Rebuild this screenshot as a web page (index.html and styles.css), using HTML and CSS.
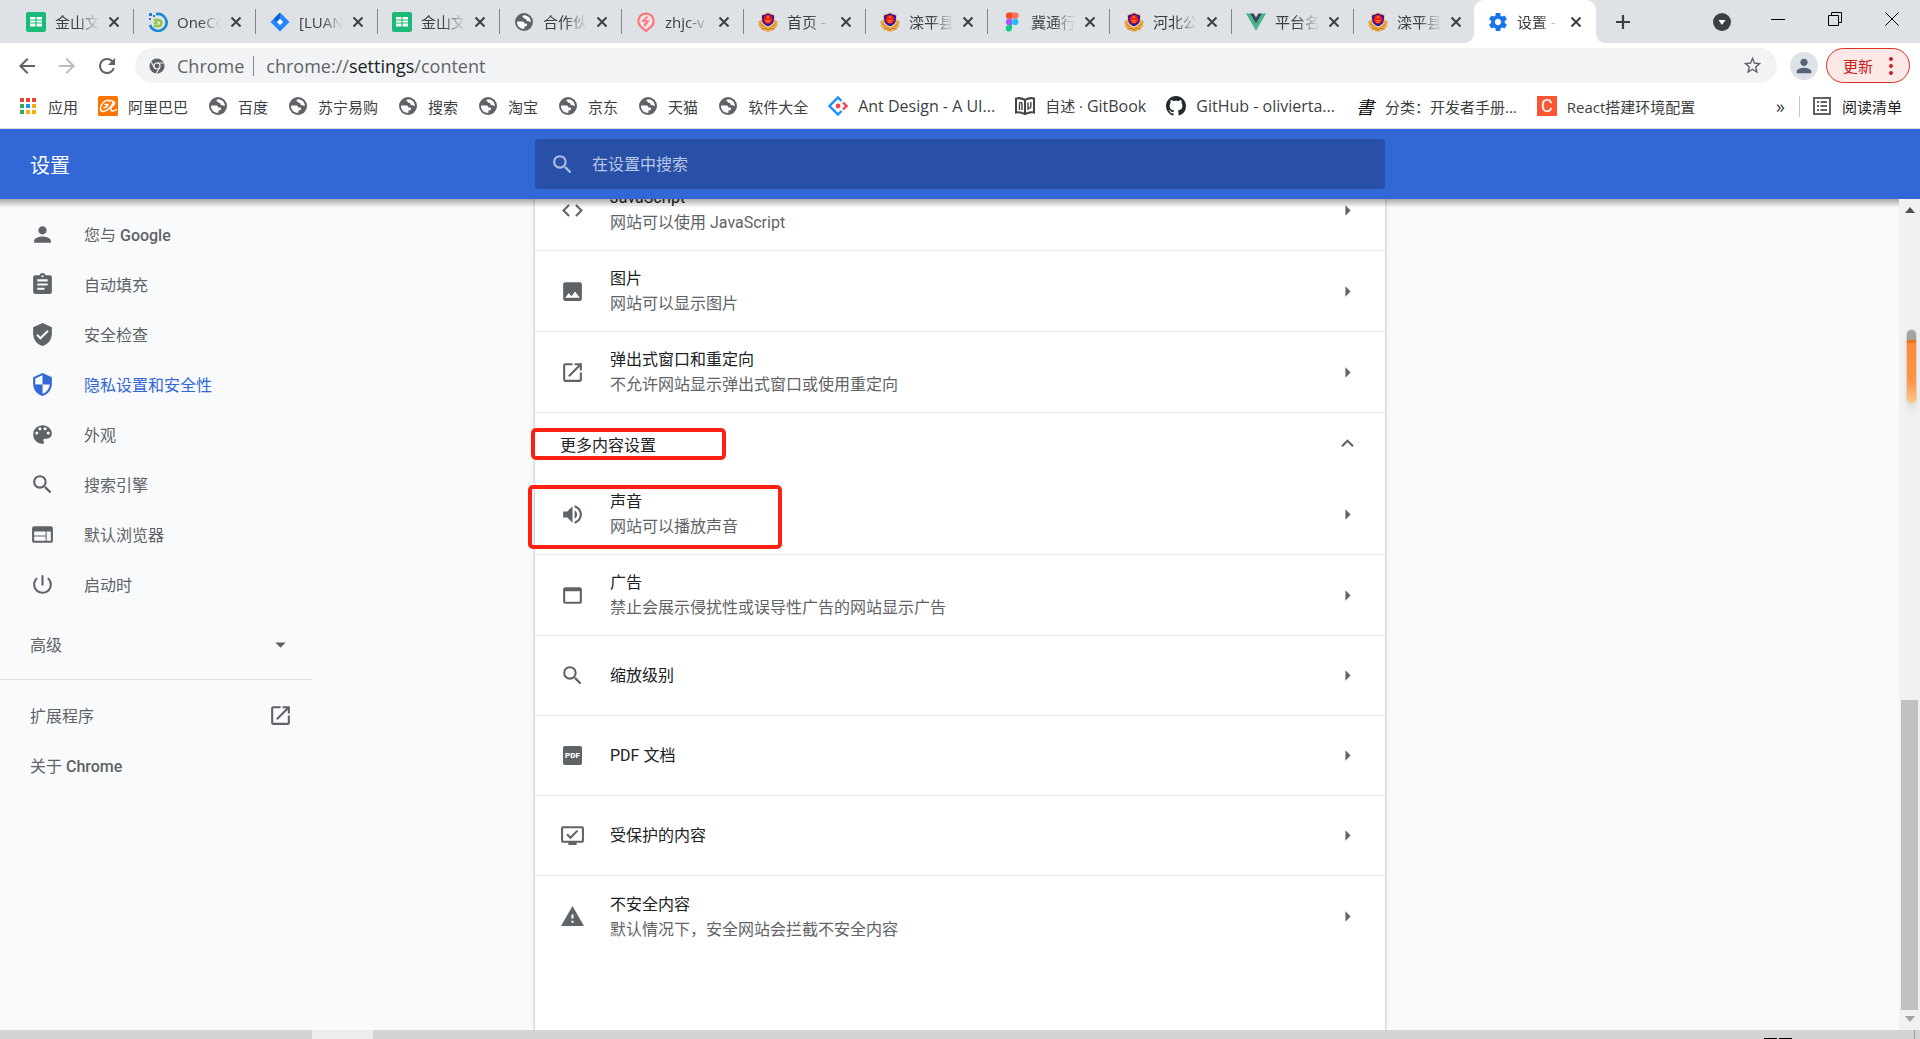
FILE: index.html
```html
<!DOCTYPE html>
<html lang="zh-CN">
<head>
<meta charset="utf-8">
<title>设置 - 网站设置</title>
<link rel="stylesheet" href="styles.css">
</head>
<body>
<svg class="sprite" aria-hidden="true">
  <symbol id="i-close" viewBox="0 0 12 12"><path d="M1.5 1.5l9 9M10.5 1.5l-9 9" fill="none" stroke="currentColor" stroke-width="2"/></symbol>
  <symbol id="i-sheet" viewBox="0 0 20 20"><rect width="20" height="20" rx="2" fill="#1bbb77"/><path d="M4 5h12v9.500H4z" fill="#fff"/><path d="M4 8h12M4 11h12M10 5v10" stroke="#1bbb77" stroke-width="1.200"/></symbol>
  <symbol id="i-onecloud" viewBox="0 0 20 20"><path d="M8 2.200A8.500 8.500 0 1 1 2 13" fill="none" stroke="#1489cf" stroke-width="2.600"/><path d="M6 8h4.500a3 3 0 0 1 0 6H6M6 11h3.500" fill="none" stroke="#8dc63f" stroke-width="2.400"/><path d="M1 1h3v3H1zM5 3h2v2H5zM1 6h2v2H1z" fill="#1489cf"/></symbol>
  <symbol id="i-jira" viewBox="0 0 20 20"><path d="M10 .5l9.500 9.500-9.500 9.500L.5 10z" fill="#2684ff"/><path d="M10 .5v6.500L6.500 10 3.800 6.700z" fill="#0f5fd6"/><path d="M10 6.800l3.200 3.200-3.200 3.200L6.800 10z" fill="#fff"/></symbol>
  <symbol id="i-globe" viewBox="0 0 20 20"><circle cx="10" cy="10" r="9" fill="#5f6368"/><path d="M3 9.500h5c1.600 0 2.300.9 2.300 2h1.500c.9 0 1.300.7 1.300 1.500 0 .9-.8 1.300-1.800 1.300h-.8v2.500C6.400 17.300 2.800 14 3 9.500zM9.500 3.200c-.8.500-1 1.300-1 2.300 1.700 0 2 .6 2.200 1.500h1.500c.2 1.300.6 2.300 2 2.300.8 0 1.300.6 2.700.7C17 6.200 13.800 3 9.500 3.200z" fill="#fff"/></symbol>
  <symbol id="i-pin" viewBox="0 0 20 20"><path d="M10 1.500a7.600 7.600 0 0 1 4.500 13.700L10 19l-4.500-3.800A7.600 7.600 0 0 1 10 1.500z" fill="#f6dfe3" stroke="#ff6f74" stroke-width="2"/><path d="M11.500 4.500L7 9h5l-3.500 5 1-3.500" fill="none" stroke="#ff6f74" stroke-width="1.600"/></symbol>
  <symbol id="i-police" viewBox="0 0 20 20"><path d="M2.500 8L0 10l1 2-.5 2 2 1.500 1 2.500 3 .5L10 20l3.500-1.500 3-.5 1-2.500 2-1.500-.5-2 1-2-2.500-2z" fill="#e8a74a"/><path d="M2.500 11.500l3 3M17.500 11.500l-3 3M4.500 16.500h3.500l2 1.500 2-1.500h3.500" stroke="#b87423" stroke-width=".8" fill="none"/><path d="M10 .2l3.500 1.500 3.500 1-.2 6c-.3 3.600-3.300 5.300-6.800 6.800-3.500-1.500-6.500-3.200-6.800-6.800L3 2.700l3.500-1z" fill="#f2c667"/><path d="M10 1.200l3 1.400 3 .8-.2 5c-.3 3-2.800 4.600-5.800 5.900-3-1.300-5.500-2.900-5.800-5.900l-.2-5 3-.8z" fill="#1a10c4"/><circle cx="10" cy="7.300" r="4.500" fill="#f5190d"/><circle cx="10" cy="5.300" r="1" fill="#ffb03b"/><path d="M7.500 8.500h5M8 10.200h4" stroke="#ff9a2e" stroke-width=".9"/></symbol>
  <symbol id="i-figma" viewBox="0 0 20 20"><path d="M7 .5h3v6.300H7a3.150 3.150 0 0 1 0-6.300z" fill="#f24e1e"/><path d="M10 .5h3.500a3.150 3.150 0 0 1 0 6.300H10z" fill="#ff7262"/><path d="M7 6.800h3v6.300H7a3.150 3.150 0 0 1 0-6.300z" fill="#a259ff"/><circle cx="13.300" cy="9.950" r="3.150" fill="#1abcfe"/><path d="M7 13.100h3v3.200a3.150 3.150 0 1 1-3-3.200z" fill="#0acf83"/></symbol>
  <symbol id="i-vue" viewBox="0 0 20 20"><path d="M0 1.500h4l6 10.300 6-10.300h4L10 18.800z" fill="#41b883"/><path d="M4 1.500h3.700L10 5.500l2.300-4H16L10 11.800z" fill="#34495e"/></symbol>
  <symbol id="i-gear" viewBox="1 1 22 22"><path fill="#1a73e8" d="M19.430 12.980c.04-.32.070-.64.070-.98s-.03-.66-.07-.98l2.110-1.650c.19-.15.240-.42.120-.64l-2-3.460c-.12-.22-.39-.3-.61-.22l-2.490 1c-.52-.4-1.080-.73-1.690-.98l-.38-2.650C14.460 2.180 14.250 2 14 2h-4c-.25 0-.46.180-.49.420l-.38 2.650c-.61.250-1.170.59-1.690.98l-2.490-1c-.23-.09-.49 0-.61.220l-2 3.460c-.13.220-.07.490.120.640l2.110 1.650c-.04.320-.07.650-.07.980s.03.660.070.980l-2.110 1.650c-.19.150-.24.420-.12.640l2 3.460c.12.220.39.300.61.220l2.490-1c.52.400 1.080.730 1.690.980l.38 2.650c.03.240.24.420.49.420h4c.25 0 .46-.18.490-.42l.38-2.650c.61-.25 1.170-.59 1.690-.98l2.490 1c.23.090.49 0 .61-.22l2-3.460c.12-.22.070-.49-.12-.64l-2.110-1.650zM12 15.500c-1.930 0-3.500-1.570-3.500-3.500s1.570-3.500 3.500-3.500 3.500 1.570 3.500 3.500-1.570 3.500-3.500 3.500z"/></symbol>
  <symbol id="i-apps" viewBox="0 0 20 20"><path d="M2 2h4v4H2zM8 2h4v4H8zM14 2h4v4h-4z" fill="#ea4335"/><path d="M2 8h4v4H2z" fill="#34a853"/><path d="M8 8h4v4H8z" fill="#1a90f0"/><path d="M14 8h4v4h-4zM8 14h4v4H8zM14 14h4v4h-4z" fill="#fbab05"/><path d="M2 14h4v4H2z" fill="#34a853"/></symbol>
  <symbol id="i-ali" viewBox="0 0 20 20"><rect width="20" height="20" rx="1.500" fill="#ff7300"/><path d="M11.500 4.500C7 3.500 2.500 8 2.500 12.500c0 4.500 5 3.500 8.500 0 2.500-2.500 4.500-6 3.500-7.500-.8-1-2.500-.5-3.500.5M6 11.500c2.500.3 3.500-1.500 4-3H7M15 5.500c3 .3 1.500 3.500-1.500 5.500-2.500 3 .5 5.500 5 2.500" fill="none" stroke="#fff" stroke-width="1.500" stroke-linecap="round"/></symbol>
  <symbol id="i-ant" viewBox="0 0 20 20"><path d="M13.500 5L10 1.500 1.500 10l8.500 8.500 3.500-3.500" fill="none" stroke="#1c8cff" stroke-width="2.400"/><path d="M15 6.500l3.500 3.500L15 13.500" fill="none" stroke="#f5434f" stroke-width="2.400"/><circle cx="10" cy="10" r="2.400" fill="#f5434f"/></symbol>
  <symbol id="i-book" viewBox="0 0 20 20"><path d="M1 2.500c3-.8 6-.3 9 1.300 3-1.600 6-2.100 9-1.300v14c-3-.5-6 0-9 1.700-3-1.700-6-2.200-9-1.700zM10 4v14" fill="#fff" stroke="#444" stroke-width="2"/><path d="M4.500 14V7.500c0-1.500 2.500-1.500 2.500 0V14M13 14V6.500M15.800 6v5c0 1.500-2.800 1.500-2.800 0" fill="none" stroke="#444" stroke-width="1.400"/></symbol>
  <symbol id="i-github" viewBox="0 0 16 16"><path fill="#24292e" d="M8 0C3.580 0 0 3.580 0 8c0 3.540 2.290 6.530 5.470 7.590.4.070.55-.17.55-.38 0-.19-.01-.82-.01-1.490-2.010.37-2.530-.49-2.690-.94-.09-.23-.48-.94-.82-1.130-.28-.15-.68-.52-.01-.53.630-.01 1.080.580 1.230.820.720 1.210 1.870.870 2.330.660.070-.52.280-.87.510-1.070-1.780-.2-3.640-.89-3.640-3.950 0-.87.310-1.590.820-2.150-.08-.2-.36-1.020.080-2.120 0 0 .67-.21 2.200.820.640-.18 1.320-.27 2-.27s1.360.09 2 .270c1.530-1.040 2.200-.82 2.200-.82.440 1.100.160 1.920.080 2.120.510.560.820 1.270.820 2.150 0 3.070-1.870 3.750-3.650 3.950.290.250.540.730.540 1.480 0 1.070-.01 1.930-.01 2.200 0 .21.150.460.550.380A8.010 8.010 0 0 0 16 8c0-4.420-3.580-8-8-8z"/></symbol>
  <symbol id="i-list" viewBox="0 0 20 20"><path d="M2 2h16v16H2z" fill="none" stroke="#5f6368" stroke-width="2"/><path d="M5 6h2M5 10h2M5 14h2M8.500 6H15M8.500 10H15M8.500 14H15" stroke="#5f6368" stroke-width="2"/></symbol>
  <symbol id="i-back" viewBox="0 0 24 24"><path d="M20 11H7.830l5.590-5.590L12 4l-8 8 8 8 1.410-1.410L7.830 13H20z"/></symbol>
  <symbol id="i-forward" viewBox="0 0 24 24"><path d="M12 4l-1.410 1.410L16.170 11H4v2h12.170l-5.580 5.590L12 20l8-8z"/></symbol>
  <symbol id="i-reload" viewBox="0 0 24 24"><path d="M17.650 6.350A7.960 7.960 0 0 0 12 4a8 8 0 1 0 7.730 10h-2.080A6 6 0 1 1 12 6c1.660 0 3.140.69 4.220 1.780L13 11h7V4z"/></symbol>
  <symbol id="i-chrome" viewBox="0 0 18 18"><circle cx="9" cy="9" r="8.500" fill="#5f6368"/><circle cx="9" cy="9" r="3.400" fill="none" stroke="#f1f3f4" stroke-width="1.300"/><path d="M9 5.600h7.500M6 10.700L2.300 4.300M12 10.700L8.300 17" stroke="#f1f3f4" stroke-width="1.200"/></symbol>
  <symbol id="i-star" viewBox="0 0 24 24"><path d="M22 9.240l-7.190-.62L12 2 9.190 8.630 2 9.240l5.460 4.730L5.820 21 12 17.270 18.180 21l-1.630-7.030zM12 15.400l-3.760 2.270 1-4.280-3.320-2.880 4.380-.38L12 6.100l1.710 4.040 4.380.38-3.320 2.880 1 4.280z"/></symbol>
  <symbol id="i-person" viewBox="0 0 24 24"><path d="M12 12c2.210 0 4-1.790 4-4s-1.790-4-4-4-4 1.790-4 4 1.790 4 4 4zm0 2c-2.670 0-8 1.340-8 4v2h16v-2c0-2.660-5.330-4-8-4z"/></symbol>
  <symbol id="i-clipboard" viewBox="0 0 24 24"><path d="M19 3h-4.180C14.400 1.840 13.300 1 12 1s-2.400.84-2.820 2H5c-1.100 0-2 .9-2 2v14c0 1.100.9 2 2 2h14c1.100 0 2-.9 2-2V5c0-1.100-.9-2-2-2zm-7 0c.55 0 1 .45 1 1s-.45 1-1 1-1-.45-1-1 .45-1 1-1zm2 14H7v-2h7v2zm3-4H7v-2h10v2zm0-4H7V7h10v2z"/></symbol>
  <symbol id="i-check" viewBox="0 0 24 24"><path d="M12 1L3 5v6c0 5.550 3.840 10.740 9 12 5.160-1.260 9-6.450 9-12V5l-9-4zm-2 16l-4-4 1.410-1.410L10 14.170l6.590-6.590L18 9l-8 8z"/></symbol>
  <symbol id="i-shield" viewBox="0 0 24 24"><path d="M12 1L3 5v6c0 5.550 3.840 10.740 9 12 5.160-1.260 9-6.450 9-12V5l-9-4zm0 10.990h7c-.53 4.120-3.280 7.790-7 8.940V12H5V6.300l7-3.110v8.800z"/></symbol>
  <symbol id="i-palette" viewBox="0 0 24 24"><path d="M12 3a9 9 0 0 0 0 18c.83 0 1.500-.67 1.500-1.500 0-.39-.15-.74-.39-1.010-.23-.26-.38-.61-.38-.99 0-.83.670-1.500 1.500-1.500H16c2.760 0 5-2.240 5-5 0-4.420-4.030-8-9-8zm-5.500 9a1.500 1.500 0 1 1 0-3 1.500 1.500 0 0 1 0 3zm3-4a1.500 1.500 0 1 1 0-3 1.500 1.500 0 0 1 0 3zm5 0a1.500 1.500 0 1 1 0-3 1.500 1.500 0 0 1 0 3zm3 4a1.500 1.500 0 1 1 0-3 1.500 1.500 0 0 1 0 3z"/></symbol>
  <symbol id="i-search" viewBox="0 0 24 24"><path d="M15.500 14h-.79l-.28-.27A6.470 6.470 0 0 0 16 9.500 6.500 6.500 0 1 0 9.500 16c1.610 0 3.090-.59 4.230-1.570l.27.280v.79l5 4.990L20.490 19l-4.990-5zm-6 0a4.500 4.500 0 1 1 0-9 4.500 4.500 0 0 1 0 9z"/></symbol>
  <symbol id="i-web" viewBox="0 0 24 24"><path d="M20 4H4c-1.100 0-1.990.9-1.990 2L2 18c0 1.100.9 2 2 2h16c1.100 0 2-.9 2-2V6c0-1.100-.9-2-2-2zm-5 14H4v-4h11v4zm0-5H4V9h11v4zm5 5h-4V9h4v9z"/></symbol>
  <symbol id="i-power" viewBox="0 0 24 24"><path d="M13 3h-2v10h2V3zm4.830 2.170l-1.420 1.420A6.920 6.920 0 0 1 19 12a7 7 0 1 1-11.420-5.420L6.170 5.170A8.930 8.930 0 0 0 3 12a9 9 0 0 0 18 0c0-2.740-1.230-5.180-3.170-6.830z"/></symbol>
  <symbol id="i-down" viewBox="0 0 24 24"><path d="M7 10l5 5 5-5z"/></symbol>
  <symbol id="i-right" viewBox="0 0 24 24"><path d="M10 7v10l5-5z"/></symbol>
  <symbol id="i-up" viewBox="0 0 24 24"><path d="M12 8l-6 6 1.410 1.410L12 10.830l4.590 4.580L18 14z"/></symbol>
  <symbol id="i-open" viewBox="0 0 24 24"><path d="M19 19H5V5h7V3H5a2 2 0 0 0-2 2v14a2 2 0 0 0 2 2h14c1.100 0 2-.9 2-2v-7h-2v7zM14 3v2h3.590l-9.830 9.830 1.410 1.410L19 6.410V10h2V3h-7z"/></symbol>
  <symbol id="i-code" viewBox="0 0 24 24"><path d="M9.400 16.600L4.800 12l4.600-4.600L8 6l-6 6 6 6 1.400-1.400zm5.200 0l4.600-4.600-4.600-4.600L16 6l6 6-6 6-1.400-1.400z"/></symbol>
  <symbol id="i-image" viewBox="0 0 24 24"><path d="M21 19V5c0-1.100-.9-2-2-2H5c-1.100 0-2 .9-2 2v14c0 1.100.9 2 2 2h14c1.100 0 2-.9 2-2zM8.500 13.500l2.500 3.010L14.500 12l4.500 6H5l3.500-4.500z"/></symbol>
  <symbol id="i-sound" viewBox="0 0 24 24"><path d="M3 9v6h4l5 5V4L7 9H3zm13.500 3A4.500 4.500 0 0 0 14 7.970v8.050c1.480-.73 2.500-2.250 2.500-4.020zM14 3.230v2.060c2.890.86 5 3.540 5 6.710s-2.110 5.850-5 6.710v2.060c4.010-.91 7-4.490 7-8.770s-2.990-7.860-7-8.770z"/></symbol>
  <symbol id="i-window" viewBox="0 0 24 24"><path d="M19 4H5a2 2 0 0 0-2 2v12a2 2 0 0 0 2 2h14c1.100 0 2-.9 2-2V6c0-1.100-.89-2-2-2zm0 14H5V8h14v10z"/></symbol>
  <symbol id="i-monitor" viewBox="0 0 24 24"><path d="M21 3H3c-1.100 0-2 .9-2 2v12c0 1.100.9 2 2 2h5v2h8v-2h5c1.100 0 2-.9 2-2V5c0-1.100-.9-2-2-2zm0 14H3V5h18v12zM10 15.500l-4-4 1.400-1.400 2.600 2.600 6.100-6.100L17.500 8z"/></symbol>
  <symbol id="i-warn" viewBox="0 0 24 24"><path d="M1 21h22L12 2 1 21zm12-3h-2v-2h2v2zm0-4h-2v-4h2v4z"/></symbol>
</svg>

<div class="browser">
  <header class="tabstrip">
    <nav class="tabs" aria-label="标签页">
      <div class="tab"><svg class="fav"><use href="#i-sheet"/></svg><a href="#">金山文</a><button aria-label="关闭"><svg><use href="#i-close"/></svg></button></div>
      <div class="tab"><svg class="fav"><use href="#i-onecloud"/></svg><a href="#">OneCo</a><button aria-label="关闭"><svg><use href="#i-close"/></svg></button></div>
      <div class="tab"><svg class="fav"><use href="#i-jira"/></svg><a href="#">[LUAN</a><button aria-label="关闭"><svg><use href="#i-close"/></svg></button></div>
      <div class="tab"><svg class="fav"><use href="#i-sheet"/></svg><a href="#">金山文</a><button aria-label="关闭"><svg><use href="#i-close"/></svg></button></div>
      <div class="tab"><svg class="fav"><use href="#i-globe"/></svg><a href="#">合作伙</a><button aria-label="关闭"><svg><use href="#i-close"/></svg></button></div>
      <div class="tab"><svg class="fav"><use href="#i-pin"/></svg><a href="#">zhjc-v</a><button aria-label="关闭"><svg><use href="#i-close"/></svg></button></div>
      <div class="tab"><svg class="fav"><use href="#i-police"/></svg><a href="#">首页 -</a><button aria-label="关闭"><svg><use href="#i-close"/></svg></button></div>
      <div class="tab"><svg class="fav"><use href="#i-police"/></svg><a href="#">滦平县</a><button aria-label="关闭"><svg><use href="#i-close"/></svg></button></div>
      <div class="tab"><svg class="fav"><use href="#i-figma"/></svg><a href="#">冀通行</a><button aria-label="关闭"><svg><use href="#i-close"/></svg></button></div>
      <div class="tab"><svg class="fav"><use href="#i-police"/></svg><a href="#">河北公</a><button aria-label="关闭"><svg><use href="#i-close"/></svg></button></div>
      <div class="tab"><svg class="fav"><use href="#i-vue"/></svg><a href="#">平台名</a><button aria-label="关闭"><svg><use href="#i-close"/></svg></button></div>
      <div class="tab before-active"><svg class="fav"><use href="#i-police"/></svg><a href="#">滦平县</a><button aria-label="关闭"><svg><use href="#i-close"/></svg></button></div>
      <div class="tab active"><svg class="fav"><use href="#i-gear"/></svg><a href="#">设置 -</a><button aria-label="关闭"><svg><use href="#i-close"/></svg></button></div>
    </nav>
    <button class="newtab" aria-label="新标签页"><svg viewBox="0 0 16 16"><path d="M8 1v14M1 8h14" stroke="#3c4043" stroke-width="2.200"/></svg></button>
    <button class="tabsearch" aria-label="搜索标签页"><svg viewBox="0 0 18 18"><circle cx="9" cy="9" r="9" fill="#3c4043"/><path d="M5.500 7h7L9 12z" fill="#fff"/></svg></button>
    <div class="winctl">
      <button aria-label="最小化"><svg viewBox="0 0 14 14"><path d="M0 7.500h14" stroke="#000"/></svg></button>
      <button aria-label="还原"><svg viewBox="0 0 14 14"><path d="M.5 3.500h10v10H.500zM3.500 3V.500h10v10H11" fill="none" stroke="#000"/></svg></button>
      <button aria-label="关闭窗口"><svg viewBox="0 0 14 14"><path d="M.5.500l13 13M13.500.500l-13 13" stroke="#000" stroke-width="1"/></svg></button>
    </div>
  </header>

  <div class="toolbar">
    <button class="nav" aria-label="后退"><svg><use href="#i-back"/></svg></button>
    <button class="nav off" aria-label="前进"><svg><use href="#i-forward"/></svg></button>
    <button class="nav" aria-label="重新加载"><svg><use href="#i-reload"/></svg></button>
    <div class="omnibox">
      <svg class="site"><use href="#i-chrome"/></svg>
      <span class="chip">Chrome</span>
      <div class="url" role="textbox" contenteditable="true" spellcheck="false" aria-label="地址栏">chrome://<b>settings</b>/content</div>
      <button class="star" aria-label="加入书签"><svg><use href="#i-star"/></svg></button>
    </div>
    <button class="avatar" aria-label="用户"><svg><use href="#i-person"/></svg></button>
    <button class="update">更新<svg viewBox="0 0 4 20"><circle cx="2" cy="3" r="2"/><circle cx="2" cy="10" r="2"/><circle cx="2" cy="17" r="2"/></svg></button>
  </div>

  <nav class="bookmarks" aria-label="书签栏">
    <a href="#"><svg><use href="#i-apps"/></svg>应用</a>
    <a href="#"><svg><use href="#i-ali"/></svg>阿里巴巴</a>
    <a href="#"><svg><use href="#i-globe"/></svg>百度</a>
    <a href="#"><svg><use href="#i-globe"/></svg>苏宁易购</a>
    <a href="#"><svg><use href="#i-globe"/></svg>搜索</a>
    <a href="#"><svg><use href="#i-globe"/></svg>淘宝</a>
    <a href="#"><svg><use href="#i-globe"/></svg>京东</a>
    <a href="#"><svg><use href="#i-globe"/></svg>天猫</a>
    <a href="#"><svg><use href="#i-globe"/></svg>软件大全</a>
    <a href="#" class="latin"><svg><use href="#i-ant"/></svg>Ant Design - A UI...</a>
    <a href="#"><svg><use href="#i-book"/></svg><span>自述 · <span class="latin">GitBook</span></span></a>
    <a href="#" class="latin"><svg><use href="#i-github"/></svg>GitHub - olivierta...</a>
    <a href="#"><span class="glyph brush">書</span>分类：开发者手册...</a>
    <a href="#"><span class="glyph csdn">C</span>React搭建环境配置</a>
    <button class="more" aria-label="更多书签">»</button>
    <a href="#" class="reading"><svg><use href="#i-list"/></svg>阅读清单</a>
  </nav>

  <div class="titlebar">
    <h1>设置</h1>
    <label class="search"><svg><use href="#i-search"/></svg><input type="search" placeholder="在设置中搜索" aria-label="在设置中搜索"></label>
  </div>

  <div class="page">
    <nav class="side" aria-label="设置菜单">
      <a href="#"><svg><use href="#i-person"/></svg><span>您与 <em>Google</em></span></a>
      <a href="#"><svg><use href="#i-clipboard"/></svg>自动填充</a>
      <a href="#"><svg><use href="#i-check"/></svg>安全检查</a>
      <a href="#" class="current"><svg><use href="#i-shield"/></svg>隐私设置和安全性</a>
      <a href="#"><svg><use href="#i-palette"/></svg>外观</a>
      <a href="#"><svg><use href="#i-search"/></svg>搜索引擎</a>
      <a href="#"><svg><use href="#i-web"/></svg>默认浏览器</a>
      <a href="#"><svg><use href="#i-power"/></svg>启动时</a>
      <button class="advanced">高级<svg><use href="#i-down"/></svg></button>
      <hr>
      <a href="#" class="plain">扩展程序<svg><use href="#i-open"/></svg></a>
      <a href="#" class="plain"><span>关于 <em>Chrome</em></span></a>
    </nav>

    <main class="card">
      <a class="row" href="#"><svg><use href="#i-code"/></svg><span class="text"><span>JavaScript</span><small>网站可以使用 JavaScript</small></span><svg><use href="#i-right"/></svg></a>
      <a class="row" href="#"><svg><use href="#i-image"/></svg><span class="text"><span>图片</span><small>网站可以显示图片</small></span><svg><use href="#i-right"/></svg></a>
      <a class="row" href="#"><svg><use href="#i-open"/></svg><span class="text"><span>弹出式窗口和重定向</span><small>不允许网站显示弹出式窗口或使用重定向</small></span><svg><use href="#i-right"/></svg></a>
      <button class="expand">更多内容设置<svg><use href="#i-up"/></svg><i class="mark mark-title"></i></button>
      <a class="row" href="#"><svg><use href="#i-sound"/></svg><span class="text"><span>声音</span><small>网站可以播放声音</small></span><svg><use href="#i-right"/></svg><i class="mark mark-row"></i></a>
      <a class="row" href="#"><svg><use href="#i-window"/></svg><span class="text"><span>广告</span><small>禁止会展示侵扰性或误导性广告的网站显示广告</small></span><svg><use href="#i-right"/></svg></a>
      <a class="row single" href="#"><svg><use href="#i-search"/></svg><span class="text"><span>缩放级别</span></span><svg><use href="#i-right"/></svg></a>
      <a class="row single" href="#"><span class="pdf">PDF</span><span class="text"><span>PDF 文档</span></span><svg><use href="#i-right"/></svg></a>
      <a class="row single" href="#"><svg><use href="#i-monitor"/></svg><span class="text"><span>受保护的内容</span></span><svg><use href="#i-right"/></svg></a>
      <a class="row last" href="#"><svg><use href="#i-warn"/></svg><span class="text"><span>不安全内容</span><small>默认情况下，安全网站会拦截不安全内容</small></span><svg><use href="#i-right"/></svg></a>
    </main>

    <div class="scrollbar" aria-hidden="true">
      <svg viewBox="0 0 10 6"><path d="M0 6l5-6 5 6z" fill="#505050"/></svg>
      <div class="thumb"></div>
      <svg viewBox="0 0 10 6"><path d="M0 0l5 6 5-6z" fill="#a3a3a3"/></svg>
      <i class="gauge"></i>
    </div>
  </div>

  <footer class="taskbar"><i class="task"></i><i class="tray"></i><i class="tray"></i><i class="peek"></i></footer>
</div>
</body>
</html>
```
FILE: styles.css
```css
* { box-sizing: border-box; }
body { margin: 0; font-family: Roboto, "Noto Sans CJK SC", sans-serif; font-size: 16px; color: #202124; }
a { color: inherit; text-decoration: none; }
button { border: 0; padding: 0; background: none; font: inherit; color: inherit; }
svg { display: block; flex: none; fill: currentColor; }
.sprite { position: absolute; width: 0; height: 0; }
.browser { display: flex; flex-direction: column; height: 100vh; overflow: hidden; }

.tabstrip, .toolbar, .bookmarks { font-family: "Open Sans", "Noto Sans CJK SC", sans-serif; font-size: 15px; color: #3c4043; }
.tabstrip { display: flex; height: 43px; flex: none; background: #dee1e6; padding-left: 12px; }
.tabs { display: flex; }
.tab { display: flex; align-items: center; width: 122px; height: 43px; padding: 0 14px; position: relative; }
.tab::after { content: ""; position: absolute; right: 0; top: 9px; width: 1px; height: 25px; background: #80868b; }
.tab.before-active::after { display: none; }
.fav { width: 20px; height: 20px; margin-right: 9px; }
.tab a { width: 44px; overflow: hidden; white-space: pre; mask-image: linear-gradient(90deg, #000 50%, transparent); }
.tab button { margin-left: 9px; }
.tab button svg { width: 12px; height: 12px; }
.tab.active { margin-left: -2px; background: #fff; border-radius: 10px 10px 0 0; }
.tab.active::before, .tab.active::after { content: ""; position: absolute; top: auto; bottom: 0; width: 10px; height: 10px; }
.tab.active::before { left: -10px; background: radial-gradient(circle at 0 0, transparent 10px, #fff 10px); }
.tab.active::after { right: -10px; background: radial-gradient(circle at 100% 0, transparent 10px, #fff 10px); }
.newtab, .tabsearch { display: grid; place-items: center; width: 54px; }
.newtab svg { width: 16px; height: 16px; }
.tabsearch { margin-left: auto; }
.tabsearch svg { width: 18px; height: 18px; }
.winctl { display: flex; height: 37px; }
.winctl button { width: 57px; display: grid; place-items: center; }
.winctl svg { width: 14px; height: 14px; }

.toolbar { display: flex; align-items: center; height: 45px; flex: none; padding: 0 10px 0 7px; }
.nav { width: 40px; display: grid; place-items: center; color: #5f6368; }
.nav svg { width: 24px; height: 24px; }
.nav.off { color: #babcbe; }
.omnibox { flex: 1; display: flex; align-items: center; height: 35px; margin-left: 8px; padding: 0 14px; border-radius: 18px; background: #f1f3f4; font-size: 18px; color: #5f6368; }
.site { width: 16px; height: 16px; margin-right: 12px; }
.chip { padding-right: 9px; border-right: 1px solid #80868b; line-height: 20px; }
.url { flex: 1; padding-left: 12px; }
.url b { font-weight: 400; color: #202124; }
.star svg { width: 21px; height: 21px; }
.avatar { width: 28px; height: 28px; margin: 0 8px 0 13px; border-radius: 50%; background: #dee1e6; color: #56627a; display: grid; place-items: center; }
.avatar svg { width: 22px; height: 22px; }
.update { display: flex; align-items: center; justify-content: space-between; width: 84px; height: 35px; padding: 0 16px; border: 1px solid #d93025; border-radius: 18px; background: #fce8e6; color: #c5221f; }
.update svg { width: 4px; height: 20px; }

.bookmarks { display: flex; align-items: center; gap: 20px; height: 41px; flex: none; padding: 0 18px 4px; border-bottom: 1px solid #dadce0; white-space: nowrap; }
.bookmarks a { display: flex; align-items: center; gap: 10px; }
.bookmarks svg { width: 20px; height: 20px; }
.bookmarks .latin { font-size: 16px; }
.glyph { width: 20px; height: 20px; line-height: 20px; text-align: center; font-size: 18px; }
.brush { font-family: "Noto Sans CJK TC", sans-serif; font-style: italic; color: #111; }
.csdn { background: #fc5531; color: #fff; font-family: Roboto, sans-serif; }
.more { margin-left: auto; font-size: 18px; }
.reading { margin-left: -6px; padding-left: 12px; border-left: 1px solid #c4c7cb; color: #202124; }

.titlebar { display: grid; grid-template-columns: 1fr minmax(0, 850px) 1fr; align-items: center; height: 70px; flex: none; background: #3367d6; color: #fff; }
.titlebar h1 { margin: 0 30px; font-size: 20px; font-weight: 400; }
.search { display: flex; align-items: center; gap: 17px; height: 50px; padding: 0 15px; border-radius: 3px; background: #2850a7; color: #b0bfe0; }
.search svg { width: 25px; height: 25px; }
.search input { flex: 1; border: 0; outline: 0; padding: 0; background: none; font: inherit; color: #fff; }
.search input::placeholder { color: #b9c7e6; opacity: 1; }

.page { flex: 1; min-height: 0; display: grid; grid-template-columns: 1fr minmax(0, 850px) 1fr; position: relative; overflow: hidden; background: #f8fafc; }
.page::before { content: ""; position: absolute; z-index: 2; inset: 0 21px auto 0; height: 8px; background: linear-gradient(rgba(0, 0, 0, .32), rgba(0, 0, 0, .03)); }
.side { width: 313px; padding-top: 10px; color: #5f6368; }
.side a, .advanced { display: flex; align-items: center; gap: 29px; height: 50px; padding: 0 20px 0 30px; }
.side svg { width: 25px; height: 25px; }
.side em { font-style: normal; font-weight: 500; }
.side .current { color: #3367d6; }
.side .plain, .advanced { justify-content: space-between; }
.advanced { width: 100%; margin-top: 10px; }
.side hr { height: 1px; margin: 10px 0; border: 0; background: #e0e1e3; }

.card { margin-top: -29px; background: #fff; box-shadow: 0 1px 2px rgba(60, 64, 67, .3), 0 1px 3px 1px rgba(60, 64, 67, .15); }
.row, .expand { position: relative; display: flex; align-items: center; width: 100%; padding: 0 25px; }
.row { height: 81px; border-bottom: 1px solid #ececee; }
.row.single { height: 80px; }
.row.last { border-bottom: 0; }
.row svg, .expand svg { width: 25px; height: 25px; color: #5f6368; }
.pdf { width: 19px; height: 19px; margin: 0 3px; border-radius: 2px; background: #5f6368; color: #fff; font-size: 8px; font-weight: 900; line-height: 19px; text-align: center; }
.text { flex: 1; display: flex; flex-direction: column; padding-left: 25px; line-height: 25px; }
.text small { font-size: 16px; color: #5f6368; }
.expand { justify-content: space-between; height: 61px; }
.mark { position: absolute; border: 4px solid #ff2014; border-radius: 5px; }
.mark-title { left: -4px; top: 15px; width: 195px; height: 32px; }
.mark-row { left: -7px; top: 11px; width: 254px; height: 64px; }

.scrollbar { justify-self: end; position: relative; display: flex; flex-direction: column; align-items: center; width: 21px; padding: 8px 0; background: #f1f1f1; }
.scrollbar svg { width: 10px; height: 6px; }
.thumb { width: 17px; height: 38%; margin: auto 0 6px; background: #c1c1c1; }
.gauge { position: absolute; left: 8px; top: 131px; width: 9px; height: 73px; border-radius: 5px; background: linear-gradient(#a3a3a3 10px, #f0701c 10px, #f0701c 13px, #ff8a38 13px, #ff9447 70%, #ffc88c); box-shadow: 0 0 0 1px #d9d6d3, 0 6px 6px #dcdcdc; }

.taskbar { display: flex; align-items: flex-end; height: 9px; flex: none; padding-right: 5px; background: #d4d4d4; }
.task { width: 61px; height: 9px; margin-left: 312px; margin-right: auto; background: #ededed; }
.tray { width: 13px; height: 1px; margin-right: 2px; background: #000; }
.peek { width: 1px; height: 9px; margin-left: 120px; background: #999; }
```
